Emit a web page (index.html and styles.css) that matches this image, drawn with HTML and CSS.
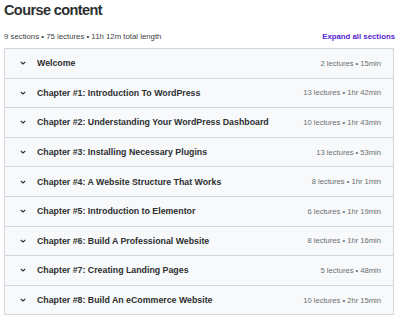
FILE: index.html
```html
<!DOCTYPE html>
<html lang="en">
<head>
  <meta charset="UTF-8" />
  <link rel="stylesheet" href="styles.css">
</head>
<body>
  <div class="curriculum">
    <h2 class="title">Course content</h2>

    <div class="summary">
      <span>9 sections • 75 lectures • 11h 12m total length</span>
      <button class="expand">Expand all sections</button>
    </div>

    <div class="sections">
      <div class="section">
        <span class="chev"><svg viewBox="0 0 10 10"><path d="M2.8 4 L5 6 L7.2 4"/></svg></span>
        <span class="name">Welcome</span>
        <span class="meta">2 lectures • 15min</span>
      </div>
      <div class="section">
        <span class="chev"><svg viewBox="0 0 10 10"><path d="M2.8 4 L5 6 L7.2 4"/></svg></span>
        <span class="name">Chapter #1: Introduction To WordPress</span>
        <span class="meta">13 lectures • 1hr 42min</span>
      </div>
      <div class="section">
        <span class="chev"><svg viewBox="0 0 10 10"><path d="M2.8 4 L5 6 L7.2 4"/></svg></span>
        <span class="name">Chapter #2: Understanding Your WordPress Dashboard</span>
        <span class="meta">10 lectures • 1hr 43min</span>
      </div>
      <div class="section">
        <span class="chev"><svg viewBox="0 0 10 10"><path d="M2.8 4 L5 6 L7.2 4"/></svg></span>
        <span class="name">Chapter #3: Installing Necessary Plugins</span>
        <span class="meta">13 lectures • 53min</span>
      </div>
      <div class="section">
        <span class="chev"><svg viewBox="0 0 10 10"><path d="M2.8 4 L5 6 L7.2 4"/></svg></span>
        <span class="name">Chapter #4: A Website Structure That Works</span>
        <span class="meta">8 lectures • 1hr 1min</span>
      </div>
      <div class="section">
        <span class="chev"><svg viewBox="0 0 10 10"><path d="M2.8 4 L5 6 L7.2 4"/></svg></span>
        <span class="name">Chapter #5: Introduction to Elementor</span>
        <span class="meta">6 lectures • 1hr 19min</span>
      </div>
      <div class="section">
        <span class="chev"><svg viewBox="0 0 10 10"><path d="M2.8 4 L5 6 L7.2 4"/></svg></span>
        <span class="name">Chapter #6: Build A Professional Website</span>
        <span class="meta">8 lectures • 1hr 16min</span>
      </div>
      <div class="section">
        <span class="chev"><svg viewBox="0 0 10 10"><path d="M2.8 4 L5 6 L7.2 4"/></svg></span>
        <span class="name">Chapter #7: Creating Landing Pages</span>
        <span class="meta">5 lectures • 48min</span>
      </div>
      <div class="section">
        <span class="chev"><svg viewBox="0 0 10 10"><path d="M2.8 4 L5 6 L7.2 4"/></svg></span>
        <span class="name">Chapter #8: Build An eCommerce Website</span>
        <span class="meta">10 lectures • 2hr 15min</span>
      </div>
    </div>
  </div>
</body>
</html>
```

FILE: styles.css
```css
* {
  margin: 0;
  padding: 0;
  box-sizing: border-box;
}

body {
  background: #fff;
  font-family: "Liberation Sans", Arial, sans-serif;
  color: #2d2f31;
}

.curriculum {
  padding: 0 6px 0 4px;
}

.title {
  font-size: 14.5px;
  font-weight: 700;
  line-height: 19px;
  letter-spacing: -0.6px;
  padding-top: 1px;
}

.summary {
  display: flex;
  justify-content: space-between;
  align-items: center;
  margin-top: 7px;
  height: 18px;
  font-size: 7.8px;
  color: #3e4143;
}

.expand {
  background: none;
  border: none;
  font-family: inherit;
  font-size: 7.8px;
  font-weight: 700;
  color: #5624d0;
  margin-right: -1px;
}

.sections {
  margin-top: 3px;
  border: 1px solid #d1d7dc;
  border-bottom: none;
}

.section {
  display: flex;
  align-items: center;
  height: 29.6px;
  padding: 0 12px 0 13px;
  background: #f7f9fa;
  border-bottom: 1px solid #d1d7dc;
}

.chev {
  display: flex;
  width: 10px;
  height: 10px;
  margin-right: 9px;
}

.chev svg {
  width: 10px;
  height: 10px;
  fill: none;
  stroke: #2d2f31;
  stroke-width: 1.1;
}

.name {
  flex: 1;
  font-size: 8.8px;
  font-weight: 700;
  color: #2d2f31;
}

.meta {
  font-size: 7.6px;
  color: #6a6f73;
}
```
